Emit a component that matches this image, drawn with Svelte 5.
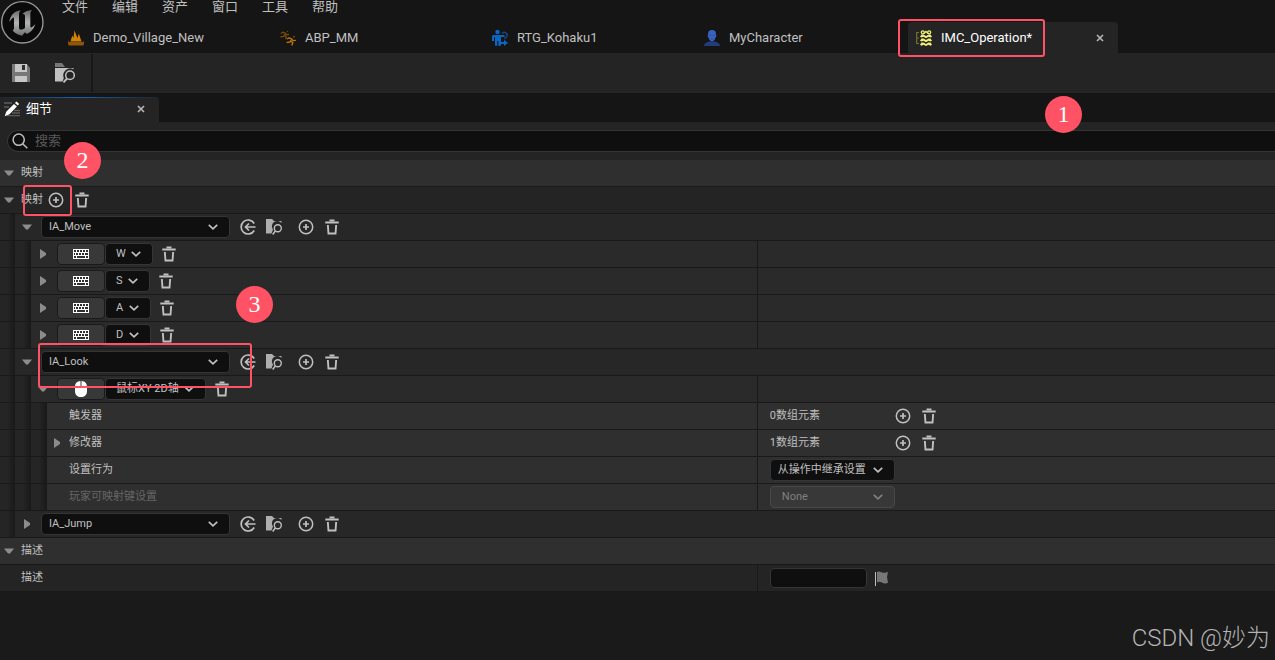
<script>
  const menus = ['文件', '编辑', '资产', '窗口', '工具', '帮助'];
  const tabs = [
    { icon: 'level', name: 'Demo_Village_New' },
    { icon: 'anim', name: 'ABP_MM' },
    { icon: 'retarget', name: 'RTG_Kohaku1' },
    { icon: 'character', name: 'MyCharacter' },
    { icon: 'context', name: 'IMC_Operation*', active: true }
  ];
  const rows = [
    { kind: 'category', label: '映射', open: true },
    { kind: 'array', label: '映射', open: true },
    { kind: 'action', name: 'IA_Move', open: true },
    { kind: 'key', name: 'W', device: 'keyboard' },
    { kind: 'key', name: 'S', device: 'keyboard' },
    { kind: 'key', name: 'A', device: 'keyboard' },
    { kind: 'key', name: 'D', device: 'keyboard' },
    { kind: 'action', name: 'IA_Look', open: true },
    { kind: 'key', name: '鼠标XY 2D轴', device: 'mouse', open: true },
    { kind: 'prop', label: '触发器', count: '0数组元素' },
    { kind: 'prop', label: '修改器', count: '1数组元素', expandable: true },
    { kind: 'prop', label: '设置行为', choice: '从操作中继承设置' },
    { kind: 'prop', label: '玩家可映射键设置', choice: 'None', disabled: true },
    { kind: 'action', name: 'IA_Jump' },
    { kind: 'category', label: '描述', open: true },
    { kind: 'text', label: '描述' }
  ];
  const depth = { category: 0, array: 0, action: 1, key: 2, prop: 3, text: 0 };
</script>

{#snippet arrow(open)}
  <button class="arrow" aria-label={open ? '折叠' : '展开'} aria-expanded={!!open}>
    <svg width="12" height="12" viewBox="0 0 12 12">
      <path d={open ? 'M1 3.5h10L7 8.5H5z' : 'M3 1v10l6-4V5z'} fill="#8c8c8c" />
    </svg>
  </button>
{/snippet}

{#snippet chevron()}
  <svg class="chevron" width="10" height="6" viewBox="0 0 10 6">
    <path d="M.8.8 5 4.8 9.2.8" fill="none" stroke="currentColor" stroke-width="1.7" />
  </svg>
{/snippet}

{#snippet plus()}
  <button class="icon" aria-label="添加元素">
    <svg width="16" height="16" viewBox="0 0 16 16" fill="none" stroke="#c0c0c0">
      <circle cx="8" cy="8" r="6.7" stroke-width="1.5" />
      <path d="M8 5v6M5 8h6" stroke-width="1.7" />
    </svg>
  </button>
{/snippet}

{#snippet trash()}
  <button class="icon" aria-label="删除">
    <svg width="16" height="16" viewBox="0 0 16 16">
      <path d="M5.5.4h5v1.8H5.5zM1.3 2.5h13.400v2H1.300zM2.900 6h1.900l.5 7.400h5.400l.5-7.400h1.900l-.7 9.400H3.600z" fill="#c0c0c0" />
    </svg>
  </button>
{/snippet}

{#snippet tabIcon(name)}
  <svg width="16" height="16" viewBox="0 0 16 16">
    {#if name === 'level'}
      <path d="M2.500 11.500 4.300 5.500l1.200 2.500L6.500.5 8.800 6.500l.8 1.500 1.200-4.500 2.700 8z" fill="#d38208" />
      <path d="M0 12.500 1 10v2h14v-1.500l1 2L15.500 15.500H.5z" fill="#8f570a" />
    {:else if name === 'anim'}
      <g fill="none" stroke-linecap="round" stroke-linejoin="round" stroke-width="1.3">
        <path d="M7.600 1.300v.1M1.200 3.200l1.600-1 2.800 1.200-2 3-2.800.4M4.600 5.400l1.800 1.300-.7 2M5.800 3.600l1 1.300 1.800-.4" stroke="#774a07" />
        <path d="M14 6.700v.1M7.400 8.700l1.700-.9 2.800 1.200-1.900 3-2.900.4M10.800 11.300l2 1.200-.8 2.500M12 9.400l1.100 1.300 2.200-.3" stroke="#c67a05" />
      </g>
    {:else if name === 'retarget'}
      <circle cx="5.500" cy="2" r="2.200" fill="#0b66c3" />
      <path d="M1.500 5h11v2H9v8.800H6.300V11h-1v4.800H3V7.300H2V11H0V6.500Q0 5 1.500 5z" fill="#0b66c3" />
      <path d="M10 3.300c3-2 5.500-.2 5 2.300-.3 1.700-1.500 2.400-2.800 3.200" stroke="#164270" stroke-width="1.800" fill="none" />
      <path d="M9 12h3V9.800l4 3.300-4 2.900v-2H9z" fill="#0b66c3" />
    {:else if name === 'character'}
      <path d="M0 16c0-3 3-4 5.200-4.600h5.600C13 12 16 13 16 16z" fill="#223d78" />
      <path d="M8 0c3 0 4.200 1.800 4 5 .6.200.4 2-.4 2.300C11 9.600 9.800 11.500 8 11.500S5 9.600 4.400 7.300C3.600 7 3.400 5.200 4 5 3.800 1.800 5 0 8 0z" fill="#3763c0" />
      <path d="M5.500 5.500h1.600M8.900 5.500h1.600M6.800 9h2.400" stroke="#274a98" stroke-width="1" />
    {:else}
      <path d="M3 2.500H.7v11H3M.7 8H3" fill="none" stroke="#72722f" stroke-width="1.200" />
      <g fill="none" stroke="#f2f077" stroke-width="1.300">
        <circle cx="6.800" cy="2.300" r="1.500" /><circle cx="13.200" cy="2.300" r="1.500" />
        <path d="M8 3.500 10 1.500l2 2" />
      </g>
      <path
        d="M4 6.800 5.500 4.500h2L10 6l2.500-1.500h2L16 6.800l-1.500.7-2-.8L10 8.300 7.500 6.700l-2 .8zM4 10.800l1.500-2.300h2L10 10l2.500-1.500h2l1.500 2.300-1.500.7-2-.8L10 12.300l-2.500-1.600-2 .8zM4 14.800l1.500-2.300h2L10 14l2.500-1.500h2l1.500 2.300-1.500.9-2-1L10 16l-2.500-1.300-2 1z"
        fill="#f2f077"
      />
    {/if}
  </svg>
{/snippet}

{#snippet combo(value, kind, label, disabled)}
  <span class="combo {kind}">
    <select aria-label={label} {disabled}><option>{value}</option></select>
    {@render chevron()}
  </span>
{/snippet}

<div class="editor">
  <header>
    <svg class="logo" width="44" height="44" viewBox="0 0 132 132">
      <defs>
        <linearGradient id="metal" x1="0" y1="0" x2="0" y2="1">
          <stop offset="0" stop-color="#686868" /><stop offset=".5" stop-color="#b4b4b4" /><stop offset="1" stop-color="#6c7070" />
        </linearGradient>
      </defs>
      <circle cx="67" cy="67" r="62" fill="#0a0a0a" stroke="#999" stroke-width="4" />
      <path d="M28 66C31 46 42 34 62 31 57 36 57 41 57 47V84C58 90 66 91 75 84V49C75 43 72 41 67 42 75 34 85 31 96 30 91 35 91 39 91 45V80C92 85 97 82 106 73 101 88 92 98 80 102L75 97 66 107C52 104 42 99 38 91 42 89 42 86 42 82V56C42 49 36 54 28 66Z" fill="url(#metal)" />
    </svg>
    <div class="bars">
      <nav class="menu">
        {#each menus as m}<button>{m}</button>{/each}
      </nav>
      <div class="tabs" role="tablist">
        {#each tabs as t}
          <div class="tab" class:active={t.active}>
            <button class="tabname" role="tab" aria-selected={!!t.active}>{@render tabIcon(t.icon)}<span>{t.name}</span></button>
            {#if t.active}
              <button class="close" aria-label="关闭"><svg width="8" height="8" viewBox="0 0 8 8"><path d="m1 1 6 6m0-6L1 7" stroke="#b4b4b4" stroke-width="1.700" /></svg></button>
            {/if}
          </div>
        {/each}
      </div>
    </div>
  </header>

  <div class="toolbar">
    <button class="icon" aria-label="保存">
      <svg width="20" height="20" viewBox="0 0 20 20">
        <path d="M1 1h15l3 4v14H1z" fill="#777" />
        <path d="M4 1h12v8H4zM4 13h12v6H4z" fill="#c6c6c6" />
        <path d="M11 2h3v5h-3z" fill="#303030" />
      </svg>
    </button>
    <button class="icon" aria-label="浏览">
      <svg width="20" height="20" viewBox="0 0 20 20">
        <path d="M0 0h7l3 4H0z" fill="#777" />
        <path d="M0 5h18.500v1.200A7 7 0 0 0 8.800 15L7.500 18.500H0z" fill="#c0c0c0" />
        <circle cx="15" cy="12.300" r="4.300" fill="none" stroke="#c0c0c0" stroke-width="1.500" />
        <path d="m12 15.500-3.500 3.800" stroke="#c0c0c0" stroke-width="1.900" />
      </svg>
    </button>
  </div>

  <div class="paneltabs">
    <div class="paneltab">
      <svg width="16" height="16" viewBox="0 0 16 16">
        <path d="M0 2h8M0 6h5M10 9.500h6M8 12h8M3 14.700h13" stroke="#5c5c5c" stroke-width="1.300" />
        <path d="M12.500.5 15.200 3l-1.500 1.600-2.800-2.500zM10 3l2.900 2.600-7.400 7.700L.7 15.300l1.500-4.600z" fill="#fff" />
      </svg>
      <span>细节</span>
      <button class="close" aria-label="关闭细节"><svg width="8" height="8" viewBox="0 0 8 8"><path d="m1 1 6 6m0-6L1 7" stroke="#b4b4b4" stroke-width="1.700" /></svg></button>
    </div>
  </div>

  <main>
    <label class="search">
      <svg width="16" height="16" viewBox="0 0 16 16" fill="none" stroke="#c0c0c0" stroke-width="1.500">
        <circle cx="6.700" cy="6.700" r="5.600" /><path d="m10.700 10.700 4.600 4.600" />
      </svg>
      <input type="search" placeholder="搜索" aria-label="搜索" />
    </label>

    {#each rows as r}
      <div class="row {r.kind}">
        {#each Array(depth[r.kind]) as _}<i class="indent"></i>{/each}
        <div class="cell">
          {#if r.kind === 'prop' && !r.expandable || r.kind === 'text'}
            <span class="noarrow"></span>
          {:else}
            {@render arrow(r.open)}
          {/if}
          {#if r.label}
            <span class="label" class:dim={r.disabled}>{r.label}</span>
          {/if}
          {#if r.kind === 'array'}
            <div class="tools">{@render plus()}{@render trash()}</div>
          {:else if r.kind === 'action'}
            {@render combo(r.name, 'asset', '输入操作')}
            <div class="tools">
              <button class="icon" aria-label="使用选中的资产">
                <svg width="16" height="16" viewBox="0 0 16 16" fill="none" stroke="#c0c0c0" stroke-width="1.700">
                  <path d="M14.200 4.500A7 7 0 1 0 14.200 11.500M15.500 8H5.500M9 4.500 5.500 8 9 11.500" />
                </svg>
              </button>
              <button class="icon" aria-label="浏览资产">
                <svg width="16" height="16" viewBox="0 0 16 16">
                  <path d="M0 0h6l2 2h7.500v2A5 5 0 0 0 7 10.500L5.500 14.500H0z" fill="#aeaeae" />
                  <circle cx="11.800" cy="9.300" r="3.500" fill="none" stroke="#c0c0c0" stroke-width="1.400" />
                  <path d="m9.300 12-2.600 3.500" stroke="#c0c0c0" stroke-width="1.500" />
                </svg>
              </button>
            </div>
            <div class="tools">{@render plus()}{@render trash()}</div>
          {:else if r.kind === 'key'}
            <button class="device" aria-label="选择按键">
              {#if r.device === 'keyboard'}
                <svg width="16" height="10" viewBox="0 0 16 10">
                  <path d="M0 0h16v10H0z" fill="#fff" />
                  <path d="M1 2h2M4 2h2M7 2h2M10 2h2M13 2h2M1 5h1M3 5h2M6 5h2M9 5h2M12 5h3M1 8h2M4 8h8M13 8h2" stroke="#303030" stroke-width="2" />
                </svg>
              {:else}
                <svg width="12" height="16" viewBox="0 0 12 16">
                  <path d="M5.500 0v6H0C0 2.500 2 .2 5.500 0zM6.500 0C10 .2 12 2.500 12 6H6.500zM0 7h12v3c0 4-2.500 6-6 6s-6-2-6-6z" fill="#fff" />
                </svg>
              {/if}
            </button>
            {@render combo(r.name, 'keyname', '按键')}
            <div class="tools">{@render trash()}</div>
          {/if}
        </div>
        {#if r.kind === 'key' || r.kind === 'prop' || r.kind === 'text'}
          <div class="value">
            {#if r.count}
              <span class="count">{r.count}</span>
              <div class="tools">{@render plus()}{@render trash()}</div>
            {:else if r.choice}
              {@render combo(r.choice, r.disabled ? 'choice off' : 'choice', r.label, r.disabled)}
            {:else if r.kind === 'text'}
              <input class="desc" type="text" aria-label="描述" />
              <button class="icon" aria-label="本地化">
                <svg width="16" height="16" viewBox="0 0 16 16">
                  <path d="M1.500 2v14" stroke="#c0c0c0" stroke-width="1" />
                  <path d="M3 2C6-.2 8 4.500 14 2l-1 5 1 6C8 15 7 10 3 12.500z" fill="#777" />
                </svg>
              </button>
            {/if}
          </div>
        {/if}
      </div>
    {/each}
  </main>

  <div class="mark box-tab"></div>
  <div class="mark box-add"></div>
  <div class="mark box-look"></div>
  <span class="step one">1</span>
  <span class="step two">2</span>
  <span class="step three">3</span>
  <footer>CSDN @妙为</footer>
</div>

<style>
  :global(body) { background: #1a1a1a; }
  .editor {
    position: relative;
    min-height: 100vh;
    overflow: hidden;
    background: #1a1a1a;
    color: #c0c0c0;
    font: 11px/16px Roboto, "Noto Sans CJK SC", sans-serif;
  }
  * { box-sizing: border-box; }
  svg { display: block; flex: none; }
  button, input, select {
    margin: 0; padding: 0; border: 0; background: none;
    color: inherit; font: inherit; outline: none;
  }
  header { display: flex; height: 53px; background: #151515; font-size: 13px; }
  .logo { margin-right: 16px; }
  .bars { flex: 1; display: flex; flex-direction: column; min-width: 0; }
  .menu { display: flex; gap: 24px; height: 22px; padding-left: 2px; }
  .menu button { width: 26px; height: 14px; line-height: 14px; white-space: nowrap; }
  .tabs { display: flex; gap: 2px; height: 31px; }
  .tab { flex: 0 1 210px; display: flex; align-items: center; padding: 0 14px 0 8px; border-radius: 4px 4px 0 0; }
  .tab.active { background: #242424; color: #fff; }
  .tabname { flex: 1; display: flex; align-items: center; gap: 9px; white-space: nowrap; }
  .close, .icon { display: flex; align-items: center; justify-content: center; }
  .toolbar { display: flex; align-items: center; height: 40px; padding-left: 11px; gap: 24px; background: #242424; }
  .toolbar::after { content: ""; width: 2px; height: 38px; margin-left: -8px; background: #181818; }
  .paneltabs { height: 29px; padding-top: 4px; background: #151515; font-size: 13px; }
  .paneltab {
    display: flex; align-items: center; gap: 6px; width: 159px; height: 25px; padding: 0 14px 2px 4px;
    border-radius: 0 4px 0 0; color: #fff;
    background: linear-gradient(90deg, #242424, #0f64b8 50%, #242424) top / 100% 1px no-repeat, #242424;
  }
  .paneltab .close { margin-left: auto; }
  .search {
    display: flex; align-items: center; gap: 7px; height: 22px; margin: 0 0 8px 7px; padding-left: 4px;
    border: 1px solid #353535; border-right: 0; border-radius: 11px 0 0 11px; background: #0f0f0f; font-size: 13px;
  }
  .search input { flex: 1; height: 20px; padding-bottom: 2px; }
  .search input::placeholder { color: #5a5a5a; opacity: 1; }
  main { padding-top: 8px; background: #1a1a1a; box-shadow: inset 0 38px #242424; }
  .row { display: flex; height: 27px; border-bottom: 1px solid #191919; background: #242424; }
  .row.category { background: #2f2f2f; }
  .row.action { background: #272727; }
  .row.key { background: #2a2a2a; }
  .row.prop { background: #2f2f2f; }
  .indent { flex: none; width: 16px; background: linear-gradient(90deg, #252525 50%, #191919); }
  .indent:first-child { width: 15px; }
  .cell { flex: 1; display: flex; align-items: center; min-width: 0; padding-left: 3px; }
  .value { flex: none; display: flex; align-items: center; gap: 7px; width: 40.64%; padding-left: 12px; border-left: 1px solid #191919; }
  .arrow, .noarrow { flex: none; width: 12px; margin-right: 6px; }
  .action .cell, .key .cell { padding-left: 6px; }
  .action .arrow, .key .arrow { margin-right: 8px; }
  .prop .cell { padding-left: 4px; }
  .label, .count { white-space: nowrap; }
  .dim { color: #666; }
  .count { width: 118px; }
  .tools { display: flex; gap: 10px; }
  .array .tools { margin-left: 5px; }
  .action .tools { margin-left: 10px; }
  .action .tools + .tools { margin-left: 16px; }
  .key .tools { margin-left: 8px; }
  .combo { display: inline-grid; align-items: center; }
  .combo select {
    grid-area: 1 / 1; appearance: none; width: 100%; height: 22px; padding: 0 28px 0 7px;
    border: 1px solid #353535; border-radius: 4px; background: #0f0f0f;
  }
  .chevron { grid-area: 1 / 1; justify-self: end; margin-right: 12px; pointer-events: none; }
  .asset { width: 189px; }
  .keyname select { padding: 0 26px 0 10px; }
  .choice { width: 125px; }
  .off { color: #808080; }
  .off select { padding-left: 11px; background: #383838; border-color: #484848; opacity: 1; }
  .device {
    display: flex; align-items: center; justify-content: center; width: 48px; height: 22px;
    border: 1px solid #1a1a1a; border-radius: 4px; background: #383838;
  }
  .desc { width: 97px; height: 20px; border: 1px solid #353535; border-radius: 4px; background: #0f0f0f; }
  .mark { position: absolute; border: 2px solid #ff5264; border-radius: 3px; pointer-events: none; }
  .box-tab { left: 898px; top: 19px; width: 147px; height: 38px; }
  .box-add { left: 23px; top: 185px; width: 49px; height: 31px; }
  .box-look { left: 38px; top: 343px; width: 214px; height: 45px; }
  .step {
    position: absolute; width: 37px; height: 37px; border-radius: 50%; background: #ff5264; color: #fff;
    font: 24px/37px "Liberation Serif", serif; text-align: center;
  }
  .one { left: 1045px; top: 96px; }
  .two { left: 64px; top: 142px; }
  .three { left: 236px; top: 286px; }
  footer {
    position: absolute; right: 5px; bottom: 6px; color: #b4b4b4;
    font: 24px/32px Roboto, "Noto Sans CJK SC", sans-serif; font-weight: 300; white-space: nowrap;
  }
</style>
